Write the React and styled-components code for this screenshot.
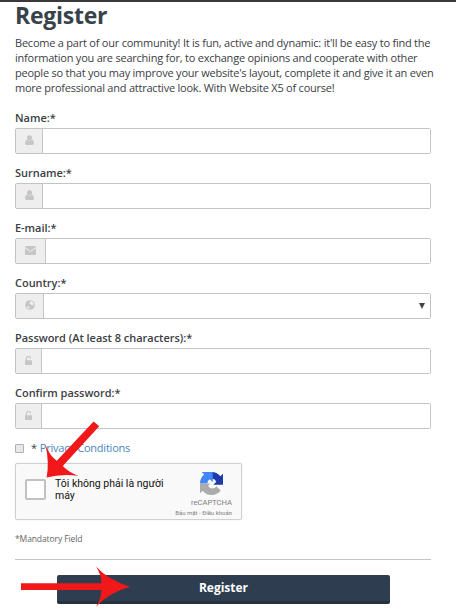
import styled, { createGlobalStyle } from "styled-components";

const fields = [
  { label: "Name:*", icon: "user", addon: 27 },
  { label: "Surname:*", icon: "user", addon: 27 },
  { label: "E-mail:*", icon: "mail", addon: 30 },
  { label: "Country:*", icon: "globe", addon: 28, select: true },
  { label: "Password (At least 8 characters):*", icon: "lock", addon: 26 },
  { label: "Confirm password:*", icon: "lock", addon: 26 },
];

const icons = {
  user: (
    <svg width="9" height="10" viewBox="0 0 9 10">
      <circle cx="4.5" cy="2.7" r="2.5" />
      <path d="M2 4.6Q4.5 6.7 7 4.6Q9 5.2 9 8.3Q9 10 7.5 10H1.5Q0 10 0 8.3Q0 5.2 2 4.6z" />
    </svg>
  ),
  mail: (
    <svg width="11" height="9" viewBox="0 0 11 9">
      <path d="M1 0h9q1 0 1 1L5.5 4.9L0 1q0-1 1-1z" />
      <path d="M0 2.3L5.5 6L11 2.3V8q0 1-1 1H1Q0 9 0 8z" />
    </svg>
  ),
  globe: (
    <svg width="10" height="10" viewBox="0 0 10 10">
      <circle cx="5" cy="5" r="4.8" />
      <path
        d="M5.2 1.2L7.2 1.3L8.8 3.4L8.3 5L6.8 5.4L5.8 4.2L4.4 3.4zM2 6.2L3.8 6.6L4.6 8L3.6 8.8Q2 8 2 6.2z"
        fill="#eee"
      />
    </svg>
  ),
  lock: (
    <svg width="7" height="9" viewBox="0 0 7 9">
      <path d="M1.4 5V2.6a2.1 2.1 0 0 1 4.2 0" fill="none" stroke="#c6c6c6" strokeWidth="1.1" />
      <rect y="4.2" width="7" height="4.8" rx="0.6" />
    </svg>
  ),
};

const App = () => {
  return (
    <>
      <GlobalStyle />
      <Page>
        <TopBar />
        <Content>
          <Title>Register</Title>
          <Intro>
            <Line>Become a part of our community! It is fun, active and dynamic: it'll be easy to find the</Line>
            <Line>information you are searching for, to exchange opinions and cooperate with other</Line>
            <Line>people so that you may improve your website's layout, complete it and give it an even</Line>
            <Line>more professional and attractive look. With Website X5 of course!</Line>
          </Intro>
          {fields.map((field) => (
            <Field key={field.label}>
              <Label>{field.label}</Label>
              <InputGroup>
                <Addon $width={field.addon}>{icons[field.icon]}</Addon>
                <Control>
                  {field.select && (
                    <svg width="6" height="6" viewBox="0 0 6 6">
                      <path d="M0 0h6L3 6z" fill="#444" />
                    </svg>
                  )}
                </Control>
              </InputGroup>
            </Field>
          ))}
          <Privacy>
            <SmallCheck />
            <span>*</span>
            <a>Privacy Conditions</a>
          </Privacy>
          <Captcha>
            <CaptchaBox />
            <CaptchaText>
              Tôi không phải là người
              <br />
              máy
            </CaptchaText>
            <Brand>
              <RecaptchaLogo />
              <BrandName>reCAPTCHA</BrandName>
              <BrandLinks>Bảo mật - Điều khoản</BrandLinks>
            </Brand>
          </Captcha>
          <Mandatory>*Mandatory Field</Mandatory>
          <Divider />
          <Submit>Register</Submit>
        </Content>
        <Arrows viewBox="0 0 456 613">
          <path d="M93.6 421.5L99.2 426.3L62.8 466Q69 472.5 78.3 475.7Q61 473.5 46.6 477.5Q49.5 463 45.6 445.5Q50 456 56.8 460.8Z" />
          <path d="M21 583.3H101.5Q101 574 96 566.6Q108 580 130 586.7Q108 593 96 606.8Q101 599 101.5 590H21Z" />
        </Arrows>
      </Page>
    </>
  );
};

const RecaptchaLogo = () => (
  <svg width="23" height="23" viewBox="0 0 64 64">
    <path
      fill="#1c3aa9"
      d="M64 31.96c0-.46-.01-.92-.03-1.37V4.57l-7.2 7.2A31.95 31.95 0 0 0 31.97 0v19.1h.02a13 13 0 0 1 13.5 7.9l-8.5 8.5H64z"
    />
    <path
      fill="#4285f4"
      d="M31.86 0H4.57l7.2 7.2A31.95 31.95 0 0 0 0 31.9v.1h20.5a13.2 13.2 0 0 1 6.5-11.9l8.5 8.5V0z"
    />
    <path
      fill="#ababab"
      d="M0 32v27.4l7.2-7.2A31.95 31.95 0 0 0 32 64c10.4 0 19.7-5 25.5-12.7L45.6 39.4a13.2 13.2 0 0 1-18.6 4.2 13 13 0 0 1-4.4-5L28.5 32z"
    />
  </svg>
);

const GlobalStyle = createGlobalStyle`
  * {
    box-sizing: border-box;
  }

  body {
    margin: 0;
    background: #fff;
    font-family: "Open Sans", "Noto Sans", sans-serif;
    color: #3b4044;
  }
`;

const Page = styled.div`
  position: relative;
  width: 456px;
  height: 613px;
  overflow: hidden;
`;

const TopBar = styled.div`
  height: 2px;
  background: #3a3838;
`;

const Content = styled.main`
  display: flex;
  flex-direction: column;
  width: 416px;
  margin-left: 15px;
`;

const Title = styled.h1`
  margin: 0;
  height: 33px;
  font-size: 23px;
  line-height: 26px;
  font-weight: 700;
  letter-spacing: -0.25px;
  color: #37424a;
`;

const Intro = styled.div`
  height: 75px;
`;

const Line = styled.div`
  font-size: 11px;
  line-height: 15px;
  letter-spacing: -0.225px;
  white-space: nowrap;
`;

const Field = styled.div`
  height: 55px;
`;

const Label = styled.label`
  display: block;
  height: 18px;
  font-size: 11px;
  line-height: 16px;
  font-weight: 600;
  letter-spacing: -0.03px;
  white-space: nowrap;
`;

const InputGroup = styled.div`
  display: flex;
  height: 26px;
  border: 1px solid #c3c3c3;
  border-radius: 2px;
`;

const Addon = styled.div`
  display: flex;
  align-items: center;
  width: ${(props) => props.$width}px;
  padding: 0 0 2px 9px;
  border-right: 1px solid #c6c6c6;
  background: #eee;
  fill: #c6c6c6;
`;

const Control = styled.div`
  display: flex;
  flex: 1;
  align-items: center;
  justify-content: flex-end;
  padding-right: 5px;
  background: #fff;
`;

const Privacy = styled.div`
  display: flex;
  align-items: center;
  height: 16px;
  font-size: 11px;
  line-height: 16px;
  letter-spacing: -0.22px;

  span {
    margin: 0 3px 0 7px;
  }

  a {
    color: #4a86bf;
  }
`;

const SmallCheck = styled.div`
  width: 9px;
  height: 9px;
  border: 1px solid #b0b0b0;
  border-radius: 1px;
  background: #e8e8e8;
`;

const Captcha = styled.div`
  display: flex;
  width: 227px;
  height: 57px;
  margin-top: 7px;
  padding-left: 9px;
  border: 1px solid #d0d0d0;
  border-radius: 2px;
  background: #f9f9f9;
  box-shadow: 0 0 2px rgba(0, 0, 0, 0.1);
`;

const CaptchaBox = styled.div`
  width: 21px;
  height: 21px;
  margin-top: 15px;
  border: 2px solid #c1c1c1;
  border-radius: 2px;
  background: #fff;
`;

const CaptchaText = styled.div`
  width: 120px;
  margin: 14px 0 0 9px;
  font-family: Roboto, sans-serif;
  font-size: 10.5px;
  line-height: 12px;
  color: #111;
  white-space: nowrap;
`;

const Brand = styled.div`
  display: flex;
  flex-direction: column;
  align-items: flex-end;
  flex: 1;
  padding: 8px 9px 0 0;
  font-family: Roboto, sans-serif;
  color: #808080;
  white-space: nowrap;

  svg {
    margin-right: 9px;
  }
`;

const BrandName = styled.div`
  margin-top: 3px;
  font-size: 7.6px;
  line-height: 10px;
`;

const BrandLinks = styled.div`
  font-size: 6px;
  line-height: 10px;
`;

const Mandatory = styled.div`
  height: 39px;
  padding-top: 12px;
  font-size: 8.5px;
  line-height: 14px;
  letter-spacing: -0.1px;
  color: #666;
`;

const Divider = styled.div`
  height: 1px;
  background: #c2c6c0;
`;

const Submit = styled.button`
  width: 333px;
  height: 29px;
  margin: 15px 0 0 42px;
  padding: 0;
  border: 0;
  border-bottom: 3px solid #243240;
  border-radius: 2px;
  background: #2e3e50;
  color: #fff;
  font: 700 12px/24px "Open Sans", sans-serif;
`;

const Arrows = styled.svg`
  position: absolute;
  top: 0;
  left: 0;
  width: 456px;
  height: 613px;
  fill: #f01818;
  pointer-events: none;
`;

export default App;
